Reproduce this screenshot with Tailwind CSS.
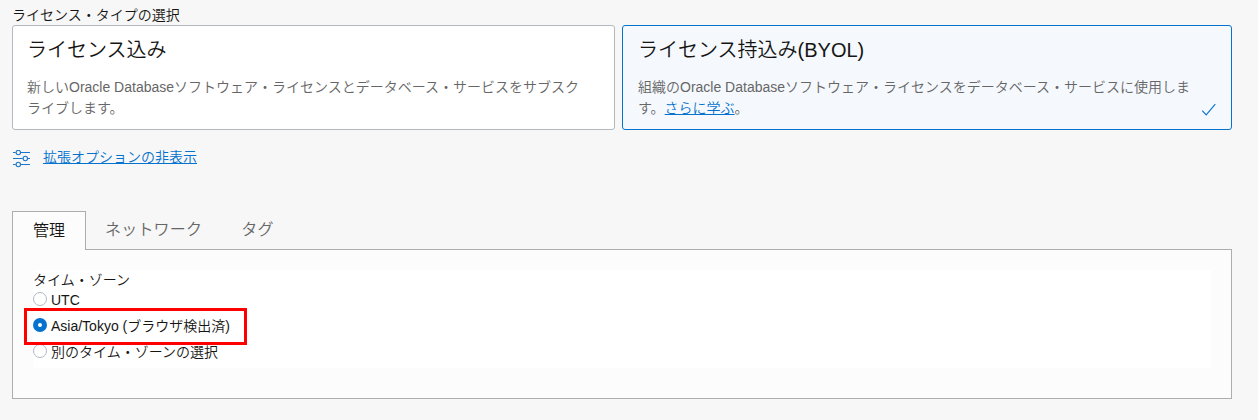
<!DOCTYPE html>
<html lang="ja">
<head>
<meta charset="utf-8">
<title>ライセンス・タイプの選択</title>
<script src="https://cdn.jsdelivr.net/npm/@tailwindcss/browser@4"></script>
</head>
<body class="h-[420px] overflow-hidden bg-[#f7f7f7] pl-3 pr-[26px] pt-[5px] font-['Liberation_Sans','Noto_Sans_CJK_JP',sans-serif] text-sm leading-[21px] font-[350] text-[#161513]">
  <div class="h-5">ライセンス・タイプの選択</div>
  <div class="flex gap-[7px]">
    <section class="h-[105px] w-[603px] rounded-[3px] border border-[#b3b8c3] bg-white pl-3.5 pt-[9px]">
      <h2 class="text-xl leading-[30px] font-[350]">ライセンス込み</h2>
      <p class="mt-3 whitespace-nowrap text-[#666]">新しいOracle Databaseソフトウェア・ライセンスとデータベース・サービスをサブスク<br>ライブします。</p>
    </section>
    <section class="relative h-[105px] w-[610px] rounded-[3px] border border-[#0572ce] bg-[#f5f9fe] pl-[15px] pt-[9px]">
      <h2 class="text-xl leading-[30px] font-[350]">ライセンス持込み(BYOL)</h2>
      <p class="mt-3 whitespace-nowrap text-[#666]">組織のOracle Databaseソフトウェア・ライセンスをデータベース・サービスに使用しま<br>す。<a class="text-[#0572ce] underline" href="#">さらに学ぶ</a>。</p>
      <svg class="absolute bottom-3 right-3.5 h-4 w-4" viewBox="0 0 16 16" fill="none" stroke="#0572ce" stroke-width="1.1"><path d="M1.2 9.6L5.2 13.9L14.3 3.2"/></svg>
    </section>
  </div>
  <div class="mt-[17px] flex h-[21px] items-center">
    <svg class="mt-0.5 h-[18px] w-[18px]" viewBox="0 0 18 18" fill="none" stroke="#1a76ca" stroke-width="1.1">
      <path d="M1 2.5H3.7M9 2.5H18M1 8.5H10.7M16 8.5H18M1 14.5H3.7M9 14.5H18"/>
      <circle cx="6.3" cy="2.5" r="2.2"/><circle cx="13.3" cy="8.5" r="2.2"/><circle cx="6.3" cy="14.5" r="2.2"/>
    </svg>
    <a class="ml-[13px] text-[#0572ce] underline" href="#">拡張オプションの非表示</a>
  </div>
  <div class="mt-[43px] flex h-[39px] text-base leading-[37px] text-[#666]">
    <div class="relative z-10 h-[39px] w-[74px] border border-b-0 border-[#adadad] bg-[#fcfcfc] pl-5 leading-[37px] text-[#161513]">管理</div>
    <div class="ml-[19px] tracking-[0.2px]">ネットワーク</div>
    <div class="ml-[39px] tracking-[0.2px]">タグ</div>
  </div>
  <div class="-mt-px h-[150px] border border-[#adadad] bg-[#fcfcfc] p-5">
    <div class="flex h-[98px] flex-col rounded-[3px] bg-white">
      <div class="h-[18px]">タイム・ゾーン</div>
      <label class="flex h-[21px] items-center gap-1"><span class="h-3.5 w-3.5 rounded-full border border-[#b3b8c3]"></span><span class="pt-[3px]">UTC</span></label>
      <label class="relative mt-[5px] flex h-[21px] items-center gap-1">
        <span class="flex h-3.5 w-3.5 items-center justify-center rounded-full bg-[#0572ce]"><span class="h-1 w-1 rounded-full bg-white"></span></span><span class="pt-[3px]">Asia/Tokyo (ブラウザ検出済)</span>
        <span class="absolute -left-[9px] -top-1.5 z-10 h-[37px] w-[223px] border-3 border-[#fe0000]"></span>
      </label>
      <label class="mt-[5px] flex h-[21px] items-center gap-1"><span class="h-3.5 w-3.5 rounded-full border border-[#b3b8c3]"></span><span class="pt-[3px]">別のタイム・ゾーンの選択</span></label>
    </div>
  </div>
</body>
</html>
